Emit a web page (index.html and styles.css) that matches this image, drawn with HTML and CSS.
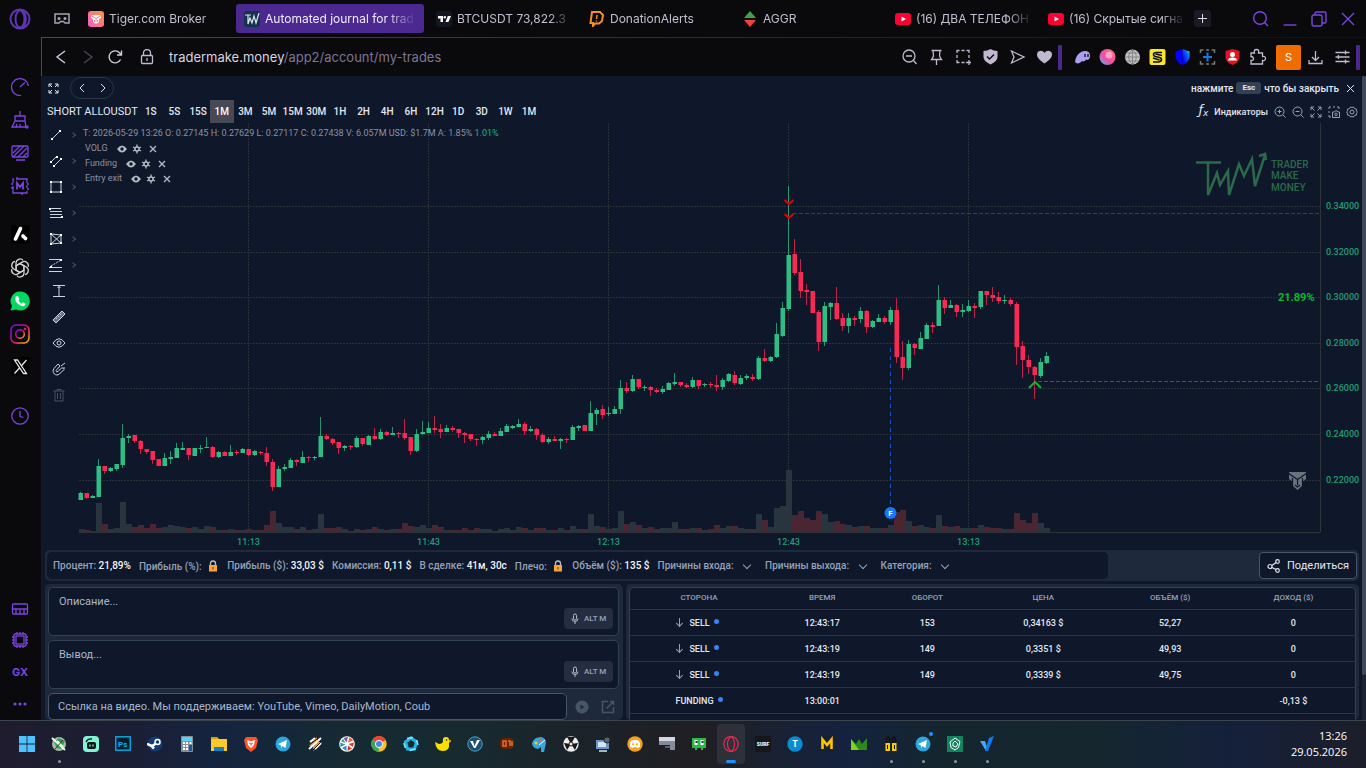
FILE: index.html
```html
<!DOCTYPE html>
<html lang="ru">
<head>
  <meta charset="UTF-8" />
  <meta name="viewport" content="width=device-width, initial-scale=1.0"/>
  <title>Automated journal for traders</title>
  <link rel="stylesheet" href="styles.css">
</head>
<body>

  <div class="browser">
    <!-- Browser side panel -->
    <aside class="sidebar">
      <div class="side-logo">
        <svg width="22" height="22" viewBox="0 0 22 22"><circle cx="11" cy="11" r="9.500"/><ellipse cx="11" cy="11" rx="4.500" ry="8.500"/><path d="M13 2.500c5 2 5 15 0 17"/></svg>
      </div>
      <div class="side-group">
        <svg width="18" height="18" viewBox="0 0 18 18"><path d="M10 17.500A8.500 8.500 0 1 1 17.400 8M9 9l5-4.500"/></svg>
        <svg width="18" height="18" viewBox="0 0 18 18"><path d="M9 0v5M4 5h10v5H4zM4 10l-3 6h14l-1-6M5 16l1-3M9 16v-3"/><circle cx="16" cy="16" r="1"/></svg>
        <svg width="18" height="18" viewBox="0 0 18 18"><rect x="1" y="2" width="16" height="11" rx="1"/><path d="M2 9l7-7M2 13L13 2M7 13l9-9M12 13l4-4M5 16h9"/></svg>
        <svg width="18" height="18" viewBox="0 0 18 18"><path d="M5 2h11v4M16 8v3M16 14v2H2V9M2 6V2h1M0 7h2M0 11h2M16 7h2M16 12h2M6 0v2M11 16v2"/><path d="M6 12.500V6l3 4 3-4v6.500" stroke-width="1.800"/></svg>
      </div>
      <div class="side-group apps">
        <svg width="19" height="19" viewBox="0 0 19 19" class="solid"><rect width="19" height="19" rx="3" fill="#000"/><path d="M9.500 3.500L4.500 14" stroke="#fff" stroke-width="3.600" stroke-linecap="round"/><path d="M12 11l2.500 2.500" stroke="#fff" stroke-width="3.600" stroke-linecap="round"/></svg>
        <svg width="20" height="20" viewBox="2 2 16 16" class="gpt"><path d="M10 6.500l3.200 1.800v5.600c0 3-3.700 4.400-5.700 2.200"/><path d="M10 6.500l3.200 1.800v5.600c0 3-3.700 4.400-5.700 2.200" transform="rotate(60 10 10)"/><path d="M10 6.500l3.200 1.800v5.600c0 3-3.700 4.400-5.700 2.200" transform="rotate(120 10 10)"/><path d="M10 6.500l3.200 1.800v5.600c0 3-3.700 4.400-5.700 2.200" transform="rotate(180 10 10)"/><path d="M10 6.500l3.200 1.800v5.600c0 3-3.700 4.400-5.700 2.200" transform="rotate(240 10 10)"/><path d="M10 6.500l3.200 1.800v5.600c0 3-3.700 4.400-5.700 2.200" transform="rotate(300 10 10)"/></svg>
        <svg width="20" height="20" viewBox="0 0 20 20" class="solid"><path fill="#00d95f" d="M10 .5a9.500 9.500 0 1 1-4 18L.5 19.500 2 15A9.500 9.500 0 0 1 10 .5z"/><path fill="#fff" d="M6 5.500l2-.5 1.500 3-1 1.500c.8 1.600 1.600 2.400 3 3l1.300-1.300 2.700 1.300c.2 1.500-1 2.700-2.500 2.700C9 15 5 10.500 5 7.500c0-.8.300-1.500 1-2z"/></svg>
        <svg width="20" height="20" viewBox="0 0 20 20"><defs><linearGradient id="insta" x1="0" y1="0" x2="1" y2="1"><stop offset="0" stop-color="#6a11ff"/><stop offset=".5" stop-color="#e0107a"/><stop offset="1" stop-color="#ffc400"/></linearGradient></defs><rect x="1" y="1" width="18" height="18" rx="5" stroke="url(#insta)" stroke-width="1.500"/><circle cx="10" cy="10" r="4.300" stroke="url(#insta)" stroke-width="1.500"/><circle cx="15" cy="5" r=".7" stroke="#e0107a"/></svg>
        <svg width="19" height="19" viewBox="0 0 19 19" class="solid"><rect width="19" height="19" rx="2" fill="#000"/><path d="M3.500 3h3l9 13.500h-3zM15.500 3l-5 5.700M8.500 11l-5 5.500" fill="none" stroke="#e6e6e6" stroke-width="1.300"/></svg>
      </div>
      <div class="side-group">
        <svg width="18" height="18" viewBox="0 0 18 18"><circle cx="9" cy="9" r="8.200"/><path d="M9 4v5.500l3.500 1"/></svg>
      </div>
      <div class="side-group bottom">
        <svg width="18" height="16" viewBox="0 0 18 16"><rect x="1.500" y="4" width="15" height="10" rx="1"/><path d="M2 9h14M5 9v5M9 10v4M13 9v5"/></svg>
        <svg width="18" height="18" viewBox="0 0 18 18"><rect x="3" y="3" width="12" height="12" rx="1"/><rect x="5" y="5" width="8" height="8"/><path d="M6 1v2M9 1v2M12 1v2M6 15v2M9 15v2M12 15v2M1 6h2M1 9h2M1 12h2M15 6h2M15 9h2M15 12h2"/></svg>
        <b class="gx">GX</b>
        <svg width="16" height="4" viewBox="0 0 16 4" class="dots"><circle cx="3" cy="2" r="1.600"/><circle cx="8" cy="2" r="1.600"/><circle cx="13" cy="2" r="1.600"/></svg>
      </div>
    </aside>

    <div class="window">
      <!-- Tabs -->
      <nav class="tabs">
        <svg class="island" width="18" height="14" viewBox="0 0 18 14"><path d="M2 2h14v9h-4l-1.500-1.500h-3L6 11H2z"/><circle cx="6" cy="6.500" r=".8"/><circle cx="12" cy="6.500" r=".8"/></svg>
        <a class="tab first" href="#">
          <svg width="16" height="16" viewBox="0 0 16 16"><defs><linearGradient id="tiger" x1="0" y1="1" x2="1" y2="0"><stop offset="0" stop-color="#f45bd4"/><stop offset="1" stop-color="#ff9431"/></linearGradient></defs><rect width="16" height="16" rx="3" fill="url(#tiger)"/><path d="M3 4h10v3l-2 1v3l-2 1.500H7L5 11V8L3 7z" fill="#fff"/><path d="M3 4.500l5 3 5-3M8 7.500v3M6.500 9v2M9.500 9v2" stroke="#f77b8c" fill="none"/></svg>
          <span>Tiger.com Broker</span>
        </a>
        <a class="tab active" href="#">
          <svg width="16" height="16" viewBox="0 0 16 16"><rect width="16" height="16" rx="3" fill="#14324e"/><path d="M1 4h6M4 4v9l2-6 2 5 2-7 2 7 3-10" fill="none" stroke="#dbe6ee" stroke-width="1.200"/></svg>
          <span>Automated journal for trad</span>
        </a>
        <a class="tab" href="#">
          <svg width="16" height="16" viewBox="0 0 16 16"><rect width="16" height="16" rx="3" fill="#131722"/><path d="M2 5h5v6H4.500V7.500H2zM9.500 11l2.300-6H15l-2.600 6z" fill="#fff"/><circle cx="8.800" cy="6.200" r="1.200" fill="#fff"/></svg>
          <span>BTCUSDT 73,822.3</span>
        </a>
        <a class="tab" href="#">
          <svg width="16" height="16" viewBox="0 0 16 16"><path d="M3 1h8l3 3-1 6-3 2.500H6L4 15v-3H1.500z" fill="none" stroke="#f59120" stroke-width="2"/><path d="M8 4l-.500 4M7.300 9.500v1" stroke="#f59120" stroke-width="1.500"/></svg>
          <span>DonationAlerts</span>
        </a>
        <a class="tab" href="#">
          <svg width="16" height="16" viewBox="0 0 16 16"><path d="M8 0l6 7H2z" fill="#43a047"/><path d="M8 16l6-7H2z" fill="#f44336"/></svg>
          <span>AGGR</span>
        </a>
        <a class="tab" href="#">
          <svg width="16" height="16" viewBox="0 0 16 16"><rect y="2" width="16" height="12" rx="3" fill="#ff0033"/><path d="M6.500 5.500v5L11 8z" fill="#fff"/></svg>
          <span>(16) ДВА ТЕЛЕФОН</span>
        </a>
        <a class="tab" href="#">
          <svg width="16" height="16" viewBox="0 0 16 16"><rect y="2" width="16" height="12" rx="3" fill="#ff0033"/><path d="M6.500 5.500v5L11 8z" fill="#fff"/></svg>
          <span>(16) Скрытые сигна</span>
        </a>
        <button class="new-tab" aria-label="New tab"><svg width="9" height="9" viewBox="0 0 9 9"><path d="M4.500 0v9M0 4.500h9"/></svg></button>
        <div class="win-controls">
          <svg width="18" height="18" viewBox="0 0 18 18"><circle cx="8" cy="8" r="6.300"/><path d="M12.500 12.500L16 16"/></svg>
          <svg width="18" height="18" viewBox="0 0 18 18"><path d="M2.500 15h13"/></svg>
          <svg width="18" height="18" viewBox="0 0 18 18"><rect x="2" y="5" width="10" height="11" rx="2"/><path d="M5 5V3.500Q5 2 6.500 2h8Q16 2 16 3.500v8q0 1.500-1.500 1.500H12"/></svg>
          <svg width="18" height="18" viewBox="0 0 18 18"><path d="M3 3l12 12M15 3L3 15"/></svg>
        </div>
      </nav>

      <!-- Address bar -->
      <div class="address">
        <button class="nav" aria-label="Back"><svg width="16" height="16" viewBox="0 0 16 16"><path d="M12 2L4 8l8 6"/></svg></button>
        <button class="nav off" aria-label="Forward"><svg width="16" height="16" viewBox="0 0 16 16"><path d="M4 2l8 6-8 6"/></svg></button>
        <button class="nav" aria-label="Reload"><svg width="16" height="16" viewBox="0 0 16 16"><path d="M13.500 10.500a6 6 0 1 1-.8-6.500L14 5.500M14.500 1.500v4.500H10"/></svg></button>
        <svg class="lock" width="16" height="16" viewBox="0 0 16 16"><rect x="2.500" y="6.500" width="11" height="8" rx="1"/><path d="M4.500 6V4a3.500 3.500 0 0 1 7 0v2M8 9v3"/></svg>
        <span class="url"><b>tradermake.money</b>/app2/account/my-trades</span>

        <div class="tools">
          <svg width="16" height="16" viewBox="0 0 16 16"><circle cx="7.500" cy="7" r="6"/><path d="M4.500 7h6M12 11.500L15 15"/></svg>
          <svg width="16" height="16" viewBox="0 0 16 16"><path d="M3 1.500h10M4.500 1.500L5 7l-2 3.500h10L11 7l.5-5.500M8 10.500V16"/></svg>
          <svg width="16" height="16" viewBox="0 0 16 16"><path d="M1.500 4V1.500H4M6 1.500h3M11 1.500h2.500V4M13.500 6v3M1.500 6v3M1.500 11v2.500H4M6 13.500h3M10.500 13.500h5M13.500 11v5"/></svg>
          <svg width="16" height="16" viewBox="0 0 16 16"><path d="M1 2q4 0 7-2 3 2 7 2v6q0 4-7 7.500Q1 12 1 8z" fill="#c0b9cf" stroke="none"/><path d="M4.500 7.500L7 10l4.500-4.500" stroke="#0a090c"/></svg>
          <svg width="16" height="16" viewBox="0 0 16 16"><path d="M2 2l12.500 6L2 14l2.500-6z"/></svg>
          <svg width="16" height="16" viewBox="0 0 16 16"><path d="M8 14.500C3 11 .5 8.500.5 5.500.5 1.500 6 .5 8 4c2-3.500 7.500-2.500 7.500 1.500 0 3-2.500 5.500-7.500 9z" fill="#c0b9cf" stroke="none"/></svg>
        </div>
        <i class="divider"></i>
        <div class="extensions">
          <svg width="17" height="16" viewBox="0 0 17 16"><path d="M1 13C2 6 6 2 11 2c4 0 5.500 2.500 5 6-.500 3-3 3.500-4 2.500-1 2-3 2.500-4 1.500-2 2.500-5 3.500-7 1z" fill="#ab9ff2"/><path d="M11 5v3M14 5v3" stroke="#0a090c" stroke-width="1.300"/></svg>
          <svg width="16" height="16" viewBox="0 0 16 16"><defs><linearGradient id="orb" x1="0" y1="1" x2="1" y2="0"><stop offset="0" stop-color="#36c6f5"/><stop offset=".4" stop-color="#f04fa8"/><stop offset="1" stop-color="#ff6f61"/></linearGradient></defs><circle cx="8" cy="8" r="8" fill="url(#orb)"/><circle cx="9.500" cy="6" r="3.500" fill="#ffa4c8"/></svg>
          <svg width="16" height="16" viewBox="0 0 16 16"><circle cx="8" cy="8" r="7.500" fill="#c4c4c4"/><path d="M.5 8h15M2 4h12M2 12h12M8 .5v15M8 .5c-5 4-5 11 0 15M8 .5c5 4 5 11 0 15" stroke="#777" stroke-width=".8" fill="none"/></svg>
          <svg width="16" height="16" viewBox="0 0 16 16"><rect width="16" height="16" rx="2" fill="#f7e733"/><path d="M12.500 3.500H7q-3 0-3 2t4 2.500 4 2.500-3 2.500H3.500M12.500 6.500L6 5M10 11l-6.500-2" fill="none" stroke="#111" stroke-width="1.600"/></svg>
          <svg width="16" height="16" viewBox="0 0 16 16"><defs><linearGradient id="trust" x1="0" y1="1" x2="1" y2="0"><stop offset=".2" stop-color="#0500ff"/><stop offset=".7" stop-color="#0a6cff"/><stop offset="1" stop-color="#3fffa0"/></linearGradient></defs><path d="M8 0L1 2.500V8q.5 5 7 8z" fill="#0500ff"/><path d="M8 0l7 2.500V8q-.500 5-7 8z" fill="url(#trust)"/></svg>
          <svg width="16" height="16" viewBox="0 0 16 16"><path d="M1 4V1h3M12 1h3v3M15 12v3h-3M4 15H1v-3M6.500 1h3M6.500 15h3" fill="none" stroke="#777" stroke-width="1.500"/><path d="M8 3.500v9M3.500 8h9" stroke="#0d7ae8" stroke-width="2"/></svg>
          <svg width="16" height="16" viewBox="0 0 16 16"><path d="M8 0l7 2v6q0 5-7 8-7-3-7-8V2z" fill="#e01423"/><circle cx="8" cy="5.500" r="2.500" fill="#fff"/><path d="M3.500 11.500q0-3 4.500-3t4.500 3z" fill="#fff"/></svg>
          <svg width="18" height="18" viewBox="0 0 18 18"><path d="M2.500 5H6q-1-3.500 2-3.500T10 5h4v3.500q3-.5 3 2t-3 2V16H2.500v-3.500q3 0 2.500-2t-2.500-2z" fill="none" stroke="#c0b9cf" stroke-width="1.300"/></svg>
        </div>
        <button class="profile">S</button>
        <div class="tools">
          <svg width="16" height="16" viewBox="0 0 16 16"><path d="M8 2v9M4.500 8L8 11.500 11.500 8M1.500 11v3.500h13V11"/></svg>
          <svg width="16" height="16" viewBox="0 0 16 16"><path d="M1 3.500h14M1 8h14M1 12.500h14M11 1.500v4M4 6v4M11 10.500v4"/></svg>
        </div>
        <i class="divider"></i>
      </div>

      <!-- Trade journal -->
      <main class="app">
        <div class="app-body">
          <div class="row-top">
            <svg class="expand" width="11" height="11" viewBox="0 0 11 11"><path d="M1 4V1h3M7 1h3v3M10 7v3H7M4 10H1V7M1 1l3 3M10 1L7 4M10 10L7 7M1 10l3-3"/></svg>
            <div class="pager">
              <button aria-label="Предыдущая"><svg width="8" height="10" viewBox="0 0 8 10"><path d="M6 1L2 5l4 4"/></svg></button>
              <button aria-label="Следующая"><svg width="8" height="10" viewBox="0 0 8 10"><path d="M2 1l4 4-4 4"/></svg></button>
            </div>
            <div class="close-hint">нажмите <kbd>Esc</kbd> что бы закрыть
              <button class="close" aria-label="Закрыть"><svg width="9" height="9" viewBox="0 0 9 9"><path d="M1 1l7 7M8 1L1 8"/></svg></button>
            </div>
          </div>

          <div class="row-frames">
            <h1>SHORT ALLOUSDT</h1>
            <div class="frames">
              <button>1S</button><button>5S</button><button>15S</button><button class="on">1M</button><button>3M</button><button>5M</button><button>15M</button><button>30M</button><button>1H</button><button>2H</button><button>4H</button><button>6H</button><button>12H</button><button>1D</button><button>3D</button><button>1W</button><button>1M</button>
            </div>
            <div class="chart-tools">
              <span class="fx">ƒ<sub>x</sub></span>
              <button class="indicators">Индикаторы</button>
              <svg width="12" height="12" viewBox="0 0 12 12"><circle cx="5.500" cy="5.500" r="4.500"/><path d="M9 9l2.500 2.500M3.500 5.500h4M5.500 3.500v4"/></svg>
              <svg width="12" height="12" viewBox="0 0 12 12"><circle cx="5.500" cy="5.500" r="4.500"/><path d="M9 9l2.500 2.500M3.500 5.500h4"/></svg>
              <svg width="12" height="12" viewBox="0 0 12 12"><path d="M1 4V1h3M8 1h3v3M11 8v3H8M4 11H1V8M1 1l3.500 3.500M11 1L7.500 4.500M11 11L7.500 7.500M1 11l3.500-3.500"/></svg>
              <svg width="12" height="12" viewBox="0 0 12 12"><path d="M1 3V1h2M5 1h2M9 1h2v2M1 5v2M1 9v2h2"/><path d="M4.500 6h2l1-1.200h1.500L10 6h1.500v5.500h-7z"/><circle cx="8" cy="8.500" r="1.300"/></svg>
              <svg width="12" height="12" viewBox="0 0 12 12"><circle cx="6" cy="6" r="2"/><path d="M4.500 1l1.500.5L7.500 1l1 1.500 2 .7-.2 1.800L11.500 6l-1.200 1.200.2 1.800-2 .5-1 1.500L6 10.500 4.500 11l-1-1.500-2-.5.2-1.800L.5 6l1.200-1-.2-1.800 2-.7z"/></svg>
            </div>
          </div>

          <div class="chart-row">
            <!-- Drawing tools -->
            <div class="draw-tools">
              <button class="more" aria-label="Линия"><svg width="14" height="14" viewBox="0 0 14 14"><path d="M3 11l8-8"/><path d="M2 10h2v2H2zM10 2h2v2h-2z" class="dot"/></svg></button>
              <button class="more" aria-label="Канал"><svg width="14" height="14" viewBox="0 0 14 14"><path d="M2 8l6-6M5 12l7-7"/><path d="M1 7h2v2H1zM4 11h2v2H4zM11 4h2v2h-2zM7 2h2v2H7z" class="dot"/></svg></button>
              <button class="more" aria-label="Прямоугольник"><svg width="14" height="14" viewBox="0 0 14 14"><path d="M2 2h10v10H2z"/><path d="M1 1h2v2H1zM11 1h2v2h-2zM1 11h2v2H1zM11 11h2v2h-2z" class="dot"/></svg></button>
              <button class="more" aria-label="Фибоначчи"><svg width="14" height="14" viewBox="0 0 14 14"><path d="M0 2.500h12M1 5.500h12M1 8.500h12M1 11.500h12"/><path d="M0 2h2v2H0zM12 10h2v2h-2z" class="dot"/></svg></button>
              <button class="more" aria-label="Паттерн"><svg width="14" height="14" viewBox="0 0 14 14"><path d="M2 2l10 1v8L2 12zM2 2l10 9M12 3L2 12"/><path d="M1 1h2v2H1zM11 2h2v2h-2zM1 11h2v2H1zM11 10h2v2h-2z" class="dot"/></svg></button>
              <button class="more" aria-label="Волны"><svg width="14" height="14" viewBox="0 0 14 14"><path d="M0 1.500h13M0 9.500h13M0 13.500h13"/><path d="M2 8l10-6" stroke-dasharray="2 1"/><path d="M1 8h2v2H1zM11 1h2v2h-2z" class="dot"/></svg></button>
              <button aria-label="Диапазон"><svg width="14" height="14" viewBox="0 0 14 14"><path d="M1 1.500h12M1 12.500h12M7 2v10M5.500 4L7 2.500 8.500 4"/></svg></button>
              <button aria-label="Линейка"><svg width="14" height="14" viewBox="0 0 14 14"><path d="M1 10l9-9 3 3-9 9zM4 8l1 1M6 6l1 1M8 4l1 1" fill="#64748b"/></svg></button>
              <button aria-label="Показать"><svg width="14" height="14" viewBox="0 0 14 14"><path d="M1 7q6-8.500 12 0-6 8.500-12 0z"/><circle cx="7" cy="7" r="2"/></svg></button>
              <button aria-label="Магнит"><svg width="14" height="14" viewBox="0 0 14 14"><path d="M6 2L2 6.500c-3 4 2 8.500 5.500 5.500L12 7.500 10 5.500l-4 4q-2 1-2-1L8 4zM9 4l4-3M11 6h2"/></svg></button>
              <button class="off" aria-label="Удалить"><svg width="14" height="14" viewBox="0 0 14 14"><path d="M1.500 3h11M5 3V1.500h4V3M3 3v10h8V3M5.500 5v6M8.500 5v6"/></svg></button>
            </div>

            <div class="chart-wrap">
              <svg id="chart" viewBox="78 123 1284 425">
                <g id="grid"></g>
                <g id="volume"></g>
                <g id="candles"></g>
                <g id="marks"></g>
                <g class="brand">
                  <path d="M1196 162.500h25M1208 162v33l9-22 3 12 8-14 1 24 10-31 5 12 8-17 3 27 10-31M1259 156l6-2 1 6"/>
                  <text x="1271" y="168">TRADER</text>
                  <text x="1271" y="179">MAKE</text>
                  <text x="1271" y="191">MONEY</text>
                </g>
                <path class="tiger-mark" d="M1289 472h17v7l-4 3v4l-4.500 4-4.500-4v-4l-4-3z"/>
                <path class="tiger-lines" d="M1288 473l9.500 6.500 9.500-6.500M1297.500 479v6M1292.500 478v9M1302.500 478v9M1295 485l2.500 2 2.500-2"/>
              </svg>
              <div class="legend">
                <p>T: 2026-05-29 13:26 O: 0.27145 H: 0.27629 L: 0.27117 C: 0.27438 V: 6.057M USD: $1.7M A: 1.85% <em>1.01%</em></p>
                <div class="ind">VOLG
                  <svg width="44" height="10" viewBox="0 0 44 10"><path d="M0 5q5-7 10 0-5 7-10 0z"/><circle cx="5" cy="5" r="1.700" class="hole"/><circle cx="20" cy="5" r="2.800" class="gear"/><path d="M20 .5v9M16 3l8 4M16 7l8-4" class="teeth"/><circle cx="20" cy="5" r="1.300" class="hole"/><path d="M33 2l6 6M39 2l-6 6" class="cross"/></svg>
                </div>
                <div class="ind">Funding
                  <svg width="44" height="10" viewBox="0 0 44 10"><path d="M0 5q5-7 10 0-5 7-10 0z"/><circle cx="5" cy="5" r="1.700" class="hole"/><circle cx="20" cy="5" r="2.800" class="gear"/><path d="M20 .5v9M16 3l8 4M16 7l8-4" class="teeth"/><circle cx="20" cy="5" r="1.300" class="hole"/><path d="M33 2l6 6M39 2l-6 6" class="cross"/></svg>
                </div>
                <div class="ind">Entry exit
                  <svg width="44" height="10" viewBox="0 0 44 10"><path d="M0 5q5-7 10 0-5 7-10 0z"/><circle cx="5" cy="5" r="1.700" class="hole"/><circle cx="20" cy="5" r="2.800" class="gear"/><path d="M20 .5v9M16 3l8 4M16 7l8-4" class="teeth"/><circle cx="20" cy="5" r="1.300" class="hole"/><path d="M33 2l6 6M39 2l-6 6" class="cross"/></svg>
                </div>
              </div>
            </div>
          </div>

          <!-- Trade summary -->
          <div class="summary">
            <div class="stats">
              <span>Процент: <b>21,89%</b></span>
              <span>Прибыль (%): <svg class="padlock" width="10" height="12" viewBox="0 0 10 12"><path d="M2.500 5V3.500a2.500 2.500 0 0 1 5 0V5" fill="none" stroke="#b5bfc9" stroke-width="1.300"/><rect x="1" y="5" width="8" height="6.500" fill="#f9a43a"/><path d="M5 7v2.500" stroke="#8a5312" stroke-width="1.300"/></svg></span>
              <span>Прибыль ($): <b>33,03 $</b></span>
              <span>Комиссия: <b>0,11 $</b></span>
              <span>В сделке: <b>41м, 30с</b></span>
              <span>Плечо: <svg class="padlock" width="10" height="12" viewBox="0 0 10 12"><path d="M2.500 5V3.500a2.500 2.500 0 0 1 5 0V5" fill="none" stroke="#b5bfc9" stroke-width="1.300"/><rect x="1" y="5" width="8" height="6.500" fill="#f9a43a"/><path d="M5 7v2.500" stroke="#8a5312" stroke-width="1.300"/></svg></span>
              <span>Объём ($): <b>135 $</b></span>
              <label>Причины входа: <select><option></option></select></label>
              <label>Причины выхода: <select><option></option></select></label>
              <label>Категория: <select><option></option></select></label>
            </div>
            <button class="share"><svg width="14" height="14" viewBox="0 0 14 14"><circle cx="3" cy="7.500" r="2"/><circle cx="10.500" cy="2.500" r="1.800"/><circle cx="10.500" cy="11.500" r="1.800"/><path d="M5 6.500l4-3M5 8.500l4 2"/></svg>Поделиться</button>
          </div>

          <div class="bottom-row">
            <section class="notes">
              <div class="note">
                <textarea aria-label="Описание" placeholder="Описание..."></textarea>
                <button><svg width="8" height="12" viewBox="0 0 8 12"><rect x="2.500" y="1" width="3" height="6" rx="1.500"/><path d="M1 5.500q0 3 3 3t3-3M4 8.500V11"/></svg>ALT M</button>
              </div>
              <div class="note">
                <textarea aria-label="Вывод" placeholder="Вывод..."></textarea>
                <button><svg width="8" height="12" viewBox="0 0 8 12"><rect x="2.500" y="1" width="3" height="6" rx="1.500"/><path d="M1 5.500q0 3 3 3t3-3M4 8.500V11"/></svg>ALT M</button>
              </div>
              <div class="video">
                <input type="text" aria-label="Ссылка на видео" placeholder="Ссылка на видео. Мы поддерживаем: YouTube, Vimeo, DailyMotion, Coub">
                <svg width="14" height="14" viewBox="0 0 14 14"><circle cx="7" cy="7" r="6.500" fill="#475569"/><path d="M5.500 4.500v5l4-2.500z" fill="#1e293b"/></svg>
                <svg width="14" height="14" viewBox="0 0 14 14"><path d="M7 1.500H1.500v11h11V7M9 1.500h3.500V5M12.500 1.500L5.500 8.500" fill="none" stroke="#475569" stroke-width="1.500"/></svg>
              </div>
            </section>

            <section class="orders">
              <table>
                <thead>
                  <tr><th class="w-side">СТОРОНА</th><th class="w-time">ВРЕМЯ</th><th class="w-turn">ОБОРОТ</th><th class="w-price">ЦЕНА</th><th class="w-vol">ОБЪЁМ ($)</th><th class="w-vol">ДОХОД ($)</th></tr>
                </thead>
                <tbody>
                  <tr><td><i class="down"></i>SELL<i class="bullet"></i></td><td>12:43:17</td><td>153</td><td>0,34163 $</td><td>52,27</td><td>0</td></tr>
                  <tr><td><i class="down"></i>SELL<i class="bullet"></i></td><td>12:43:19</td><td>149</td><td>0,3351 $</td><td>49,93</td><td>0</td></tr>
                  <tr><td><i class="down"></i>SELL<i class="bullet"></i></td><td>12:43:19</td><td>149</td><td>0,3339 $</td><td>49,75</td><td>0</td></tr>
                  <tr><td>FUNDING<i class="bullet"></i></td><td>13:00:01</td><td></td><td></td><td></td><td>-0,13 $</td></tr>
                  <tr><td></td><td></td><td></td><td></td><td></td><td></td></tr>
                </tbody>
              </table>
            </section>
          </div>
        </div>
        <div class="scroll"><i></i></div>
      </main>
    </div>
  </div>

  <!-- Taskbar -->
  <footer class="taskbar">
    <div class="task-icons">
      <span><svg viewBox="0 0 16 16"><path d="M0 0h7.600v7.600H0zM8.400 0H16v7.600H8.400zM0 8.400h7.600V16H0zM8.400 8.400H16V16H8.400z" fill="#4cc2ff"/></svg></span>
      <span class="run"><svg viewBox="0 0 16 16"><circle cx="8" cy="8" r="7" fill="#a9b8a9"/><path d="M3 6l5-4 6 3-4 8-4-1z" fill="#2fa14a"/><path d="M1 2l13 12M6 5l6 6" stroke="#efe" stroke-width="1.800"/><path d="M4 13l8-9" stroke="#333"/></svg></span>
      <span><svg viewBox="0 0 16 16"><rect width="16" height="16" rx="4" fill="#80f5d2"/><rect x="4" y="6" width="9" height="7" rx="2" fill="#09161d"/><path d="M3 6q2-4 6-3" stroke="#09161d" fill="none" stroke-width="1.300"/><path d="M7 8.500v2M10 8.500v2" stroke="#80f5d2" stroke-width="1.300"/></svg></span>
      <span><svg viewBox="0 0 16 16"><rect x=".8" y=".8" width="14.400" height="13.400" fill="#001d34" stroke="#00b4e6" stroke-width="1.400"/><text x="3" y="11" class="ps">Ps</text></svg></span>
      <span><svg viewBox="0 0 16 16"><circle cx="8" cy="8" r="7.500" fill="#123b70"/><circle cx="10.500" cy="6" r="2.500" fill="none" stroke="#fff" stroke-width="1.500"/><path d="M0 8l5 2 4-2.500M5 10.500l2 2" fill="none" stroke="#fff" stroke-width="2.500"/></svg></span>
      <span><svg viewBox="0 0 16 16"><rect x="2" width="12" height="16" rx="1" fill="#83909a"/><rect x="3" y="1" width="10" height="4" fill="#5bd1f2"/><path d="M4 7h2M7 7h2M4 10h2M7 10h2M4 13h2M7 13h2M10.500 7h2" stroke="#fff" stroke-width="2"/><path d="M10 9h3v6h-3z" fill="#175a9c"/></svg></span>
      <span><svg viewBox="0 0 16 16"><path d="M0 1h6l2 2h8v12H0z" fill="#ffc928"/><path d="M0 1h6l1 2H0z" fill="#d99a12"/><path d="M3 15v-4h10v4z" fill="#147fc9"/></svg></span>
      <span><svg viewBox="0 0 16 16"><path d="M3 1h10l2 3-2 8-5 4-5-4L1 4z" fill="#fb542b"/><path d="M4 4l3 1h2l3-1-1 5-3 3-3-3z" fill="#fff"/><path d="M6 7l2 1 2-1M8 8v2" stroke="#fb542b" fill="none"/></svg></span>
      <span><svg viewBox="0 0 16 16"><circle cx="8" cy="8" r="7.500" fill="#2ca5e0"/><path d="M3 8l9-4-1.500 8L7.500 10 6.500 12 6 9.500z" fill="#fff"/></svg></span>
      <span><svg viewBox="0 0 16 16"><path d="M2 9l8-8v5h5l-9 9v-5H1z" fill="#ef8a22"/><path d="M3 6l5-4M8 13l6-6M2 13L14 2" stroke="#fff" stroke-width="1.800"/><path d="M1 10l9-7M6 14l8-8" stroke="#151515"/></svg></span>
      <span><svg viewBox="0 0 16 16"><circle cx="8" cy="8" r="7.800" fill="#fff"/><path d="M7.500 6.500L4.500 2 9 1z" fill="#7652a8"/><path d="M9 6.500L10.500 1l4 3.500z" fill="#e36b37"/><path d="M9.500 8L15 6.500 14 11z" fill="#d13d31"/><path d="M9 9.500l4 3-4.500 2.500z" fill="#d13d31"/><path d="M7.500 9.500l0 5.500-4.500-3z" fill="#348fc0"/><path d="M6.500 8.500L1.500 11 1.200 6.500z" fill="#348fc0"/><path d="M6.500 7L2 5.500l2-3z" fill="#47a96f"/></svg></span>
      <span><svg viewBox="0 0 16 16"><circle cx="8" cy="8" r="7.700" fill="#fbc116"/><path d="M8 8L1.300 4A7.700 7.700 0 0 1 14.700 4z" fill="#ea4335"/><path d="M8 8L1.300 4A7.700 7.700 0 0 0 7.500 15.700z" fill="#34a853"/><circle cx="8" cy="8" r="3.600" fill="#4285f4" stroke="#fff"/></svg></span>
      <span><svg viewBox="0 0 16 16"><path d="M8 2l5.500 4-2 7h-7l-2-7z" fill="none" stroke="#1fb5e6" stroke-width="3.200"/><path d="M4 2.500l6-1M13.500 4l1.500 5M12.500 13l-6 1.500M2.500 12L.8 7" fill="none" stroke="#8de6fb" stroke-width="1.500"/></svg></span>
      <span><svg viewBox="0 0 16 16"><path d="M0 6l4 2q3 0 4-2-1-5 3-5 3 0 3 3l2 1-2 2q1 8-6 8-7 0-8-9z" fill="#fbe002"/><circle cx="11.500" cy="4" r=".8" fill="#111"/><path d="M14 4h2v2h-2z" fill="#f4901d"/></svg></span>
      <span><svg viewBox="0 0 16 16"><circle cx="8" cy="8" r="7.200" fill="#1d4d6c" stroke="#48a0cc"/><path d="M3 5h3l1.500 5L10 4h3L8.500 12H7z" fill="#fff"/></svg></span>
      <span><svg viewBox="0 0 16 16"><path d="M1 4l3-2h8l3 2v7l-3 2H4l-3-2z" fill="#5c2408"/><path d="M4 5v5h3V5zM9 5h2v5M13 5v5" fill="none" stroke="#f06d1b" stroke-width="1.500"/></svg></span>
      <span><svg viewBox="0 0 16 16"><path d="M1 7q2-6 9-6 5 1 5 6l-2 9h-3V11L7 13Q1 12 1 7z" fill="#36a6dd"/><circle cx="5" cy="7" r="1.500" fill="#f6cc31"/><circle cx="9" cy="4" r="1.500" fill="#ec653e"/><path d="M8 9l6-5" stroke="#fff"/></svg></span>
      <span><svg viewBox="0 0 16 16"><circle cx="8" cy="8" r="7.700" fill="#eee"/><path d="M8 8L4 1h8zM8 8l7-1-3 7zM8 8L1 7l3 7z" fill="#191919"/><circle cx="8" cy="8" r="2" fill="#eee" stroke="#191919"/></svg></span>
      <span><svg viewBox="0 0 16 16"><path d="M1 4h13v9H1z" fill="#6a98ca"/><path d="M3 6h8v5H3z" fill="#d3e4f2"/><circle cx="12" cy="4" r="3" fill="#59636d" stroke="#202830"/><path d="M4 15h8" stroke="#a9b4bd" stroke-width="2"/></svg></span>
      <span><svg viewBox="0 0 16 16"><circle cx="8" cy="8" r="7.700" fill="#f7a21b"/><path d="M3 11V7q1-3 3-3h4q2 0 3 3v4l-3 1-1-1H7l-1 1z" fill="#fff"/><circle cx="6.200" cy="8.300" r="1.100" fill="#f7a21b"/><circle cx="9.800" cy="8.300" r="1.100" fill="#f7a21b"/></svg></span>
      <span><svg viewBox="0 0 16 16"><path d="M0 1h16v13h-5V9H0z" fill="#858b9b"/><path d="M0 1h16v4H0z" fill="#d5d8e2"/><path d="M6 10h5v2H6z" fill="#5b606d"/></svg></span>
      <span><svg viewBox="0 0 16 16"><path d="M1 2h14v10h-3v2h-2v-2H6v2H4v-2H1z" fill="#2aba45"/><path d="M3.500 4h3v5h-3zM9.500 4h3v5h-3z" fill="#fff"/><path d="M4.500 6h2M10.500 6h2" stroke="#22304a" stroke-width="2"/></svg></span>
      <span class="current"><svg viewBox="0 0 16 16"><ellipse cx="8" cy="8" rx="7.200" ry="7.500" fill="none" stroke="#e21646" stroke-width="1.200"/><ellipse cx="8" cy="8" rx="3.500" ry="6.800" fill="none" stroke="#e21646" stroke-width="1.200"/></svg></span>
      <span><svg viewBox="0 0 16 16"><rect width="16" height="16" fill="#15171a"/><text x="8" y="10" class="surf">SURF</text></svg></span>
      <span><svg viewBox="0 0 16 16"><circle cx="8" cy="8" r="7.700" fill="#0b8bd4"/><text x="8" y="11" class="tee">T</text></svg></span>
      <span><svg viewBox="0 0 16 16"><rect x="1" y="1" width="14" height="14" fill="#162035"/><path d="M3.500 13V3.500L8 9l4.500-5.500V13" fill="none" stroke="#ffc400" stroke-width="2.600"/></svg></span>
      <span><svg viewBox="0 0 16 16"><path d="M0 3l5 5 3-5 3 5 5-6v12H4z" fill="#2d8a1a"/><path d="M0 3l8 11H0z" fill="#7cd321"/></svg></span>
      <span class="run"><svg viewBox="0 0 16 16"><path d="M3.500 7V3q1.500-4 3 0v4M9.500 7V3q1.500-4 3 0v4" fill="none" stroke="#111" stroke-width="1.500"/><path d="M2.500 7h4.500v8H2.500zM9 7h4.500v8H9z" fill="#fc0"/><path d="M4.500 9v4M11.500 9v4" stroke="#111"/></svg></span>
      <span class="run badge"><svg viewBox="0 0 16 16"><circle cx="8" cy="8" r="7.500" fill="#2ca5e0"/><path d="M3 8l9-4-1.500 8L7.500 10 6.500 12 6 9.500z" fill="#fff"/></svg></span>
      <span class="run"><svg viewBox="0 0 16 16"><rect width="16" height="16" fill="#10835f"/><path d="M8 2l5 3.500-1.500 6L8 14l-4-2.500L3 6zM6 7l2-2 3 3-2 3-3-1z" fill="none" stroke="#fff"/></svg></span>
      <span class="run"><svg viewBox="0 0 16 16"><path d="M1 5h5l2 6-1 4z" fill="#45a8ff"/><path d="M10 2l5-2-6 15H6z" fill="#0c7cf5"/></svg></span>
    </div>
    <div class="clock">13:26<br>29.05.2026</div>
  </footer>

  <script src="script.js"></script>
</body>
</html>
```

FILE: styles.css
```css
* {
  box-sizing: border-box;
}

body {
  margin: 0;
  height: 100vh;
  display: flex;
  flex-direction: column;
  overflow: hidden;
  background: #0a090c;
  color: #e2e8f0;
  font-family: Roboto, "Liberation Sans", sans-serif;
  font-size: 11px;
}

button,
input,
textarea,
select {
  font: inherit;
  color: inherit;
  background: none;
  border: 0;
  padding: 0;
  margin: 0;
}

svg {
  flex: none;
  display: block;
}

.browser {
  flex: 1;
  min-height: 0;
  display: flex;
}

/* Side panel */
.sidebar {
  width: 41px;
  padding-right: 1px;
  display: flex;
  flex-direction: column;
  align-items: center;
  color: #7a45e0;
}

.sidebar svg {
  fill: none;
  stroke: currentColor;
  stroke-width: 1.3;
}

.sidebar svg.solid {
  stroke: none;
}

.sidebar svg.dots {
  fill: currentColor;
  stroke: none;
}

.sidebar svg.gpt {
  stroke: #d6d6d6;
  stroke-width: 1;
}

.side-logo {
  height: 70px;
  padding-top: 8px;
}

.side-logo svg {
  stroke-width: 2;
  color: #5f35b0;
}

.side-group {
  display: grid;
  grid-auto-rows: 33px;
  place-items: center;
  margin-bottom: 16px;
}

.side-group.bottom {
  margin-top: auto;
  margin-bottom: 0;
  grid-auto-rows: 32px;
}

.gx {
  font-size: 11px;
  font-family: Inter, sans-serif;
}

/* Tabs */
.window {
  flex: 1;
  min-width: 0;
  display: flex;
  flex-direction: column;
}

.tabs {
  height: 37px;
  display: flex;
  align-items: center;
  font: 12px Inter, sans-serif;
  color: #c3bed0;
}

.island {
  margin: 0 9px 0 12px;
  fill: none;
  stroke: #a8a3b5;
  stroke-width: 1.5;
}

.tab {
  width: 153px;
  height: 29px;
  padding: 0 8px;
  display: flex;
  align-items: center;
  gap: 5px;
  color: inherit;
  text-decoration: none;
  border-radius: 3px;
}

.tab span {
  flex: 1;
  white-space: nowrap;
  -webkit-mask-image: linear-gradient(90deg, #000 80%, transparent);
  mask-image: linear-gradient(90deg, #000 80%, transparent);
}

.tab.first {
  margin-right: 3px;
}

.tab.active {
  width: 188px;
  margin-right: 4px;
  background: #4b2991;
  color: #efeaf8;
}

.new-tab {
  width: 17px;
  height: 17px;
  margin-left: 1px;
  display: grid;
  place-items: center;
  background: #1b1a24;
  border-radius: 2px;
}

.new-tab svg {
  stroke: #dcd8e6;
}

.win-controls {
  display: flex;
  gap: 11px;
  margin-left: auto;
  margin-right: 9px;
}

.win-controls svg {
  fill: none;
  stroke: #7a45e0;
  stroke-width: 1.4;
}

/* Address bar */
.address {
  height: 39px;
  display: flex;
  align-items: center;
  padding: 0 6px 0 5px;
  border-top: 1px solid;
  border-left: 1px solid #3a2467;
  border-image: linear-gradient(90deg, #5a31a8, #25204a 60%, #0f0f1c) 1;
  color: #c0b9cf;
}

.address svg {
  fill: none;
}

.nav {
  width: 27px;
  display: grid;
  place-items: center;
  stroke: #d0cada;
  stroke-width: 1.4;
}

.nav.off {
  stroke: #4a4655;
}

.lock {
  margin: 0 14px 0 11px;
  stroke: #c0b9cf;
  stroke-width: 1.3;
}

.url {
  flex: 1;
  font: 13px Inter, sans-serif;
  color: #7d7694;
}

.url b {
  font-weight: 400;
  color: #d8d2e4;
}

.tools {
  display: flex;
}

.tools svg {
  width: 27px;
  stroke: #c0b9cf;
  stroke-width: 1.3;
}

.divider {
  width: 4px;
  height: 25px;
  border-radius: 1px;
  background: #4b2991;
}

.extensions {
  display: flex;
  align-items: center;
  margin: 0 6px 0 8px;
}

.extensions svg {
  width: 25px;
}

.profile {
  width: 25px;
  height: 25px;
  margin-right: 1px;
  background: #ef6c00;
  border-radius: 2px;
  color: #fff;
  font-family: Inter, sans-serif;
}

/* App */
.app {
  flex: 1;
  min-height: 0;
  display: flex;
  background: #0f172a;
  border-left: 1px solid #1a1530;
}

.app-body {
  flex: 1;
  min-width: 0;
  display: flex;
  flex-direction: column;
  overflow: hidden;
}

.scroll {
  width: 4px;
  background: #1c2434;
}

.scroll i {
  display: block;
  height: 93%;
  background: #3f4959;
  border-radius: 2px;
}

.row-top {
  height: 24px;
  display: flex;
  align-items: center;
  padding-left: 6px;
}

.row-top svg {
  fill: none;
  stroke: #e2e8f0;
}

.pager {
  display: flex;
  justify-content: space-around;
  width: 44px;
  height: 22px;
  margin-left: 11px;
  border: 1px solid #2a3648;
  border-radius: 11px;
}

.close-hint {
  display: flex;
  align-items: center;
  gap: 3px;
  margin-left: auto;
  margin-right: 7px;
  font-size: 10px;
  font-weight: 500;
}

.close-hint kbd {
  background: #334155;
  border-radius: 3px;
  padding: 0 6px;
  font: bold 8px/12px Roboto, sans-serif;
}

.close {
  margin-left: 4px;
}

.row-frames {
  height: 23px;
  display: flex;
  align-items: stretch;
  padding-left: 5px;
}

.row-frames h1 {
  margin: 0;
  width: 92px;
  font-size: 11px;
  font-weight: 400;
  line-height: 23px;
  white-space: nowrap;
}

.frames {
  flex: 0 0 402px;
  display: flex;
}

.frames button {
  flex: 1;
  font-size: 10px;
  font-weight: 500;
}

.frames .on {
  background: #474a54;
  color: #fff;
}

.chart-tools {
  display: flex;
  align-items: center;
  gap: 6px;
  margin-left: auto;
  margin-right: 4px;
  font-size: 9px;
  font-weight: 500;
}

.chart-tools svg {
  fill: none;
  stroke: #94a3b8;
}

.fx {
  font: italic 13px/16px "DejaVu Sans", sans-serif;
}

.fx sub {
  font-size: 9px;
  vertical-align: -2px;
}

.chart-row {
  display: flex;
}

/* Drawing tools */
.draw-tools {
  width: 36px;
  margin-top: -1px;
  padding-left: 3px;
  display: flex;
  flex-direction: column;
}

.draw-tools button {
  height: 26px;
  width: 28px;
  display: flex;
  align-items: center;
  justify-content: center;
}

.draw-tools .more {
  width: 30px;
  justify-content: space-between;
  padding-left: 4px;
}

.draw-tools .more::after {
  content: "";
  width: 3px;
  height: 3px;
  border: solid #475569;
  border-width: 1px 1px 0 0;
  transform: rotate(45deg);
}

.draw-tools svg {
  fill: none;
  stroke: #cbd5e1;
}

.draw-tools .dot {
  fill: #fff;
  stroke: none;
}

.draw-tools .off {
  opacity: 0.3;
}

/* Chart */
.chart-wrap {
  flex: 1;
  min-width: 0;
  position: relative;
}

#chart {
  width: 100%;
  height: auto;
  font-family: Roboto, sans-serif;
}

.legend {
  position: absolute;
  top: 3px;
  left: 5px;
  color: #8a93a3;
  font-size: 9px;
  line-height: 15px;
}

.legend p {
  margin: 0;
}

.legend em {
  font-style: normal;
  color: #10b981;
}

.ind {
  display: flex;
  align-items: center;
  gap: 9px;
  padding-left: 2px;
}

.ind svg {
  fill: #b6bcc6;
}

.ind .hole {
  fill: #0f172a;
}

.ind .teeth,
.ind .cross {
  fill: none;
  stroke: #b6bcc6;
  stroke-width: 1.3;
}

.gridline {
  stroke: #2a2f38;
  stroke-dasharray: 2 1;
}

.axis {
  stroke: #2f3338;
}

.axis-text {
  fill: #1f9d72;
  font-size: 9px;
  font-weight: 500;
}

.up {
  fill: #2ebd85;
  stroke: #2ebd85;
}

.dn {
  fill: #f92855;
  stroke: #f92855;
}

.wick {
  stroke-opacity: 0.75;
}

.body {
  stroke: none;
}

.vol-up {
  fill: #28353f;
}

.vol-dn {
  fill: #4a2632;
}

.entry-line {
  fill: none;
  stroke: #96182a;
  stroke-dasharray: 4 2;
}

.exit-line {
  fill: none;
  stroke: #0b7a30;
  stroke-dasharray: 4 2;
}

.funding-line {
  stroke: #1657bd;
  stroke-dasharray: 4 4;
}

.percent {
  fill: #0ab82f;
  font-size: 11px;
  font-weight: 700;
}

.brand path {
  fill: none;
  stroke: #2a6a4b;
  stroke-width: 2.5;
}

.brand text {
  fill: #2a6a4b;
  font-size: 10px;
  font-weight: 500;
}

.tiger-mark {
  fill: #6a7280;
}

.tiger-lines {
  fill: none;
  stroke: #0f172a;
  stroke-width: 1.2;
}

/* Summary */
.summary {
  display: flex;
  justify-content: space-between;
  margin: 2px 3px 3px 3px;
  padding: 2px;
  background: #1e293b;
  border-radius: 5px;
}

.stats {
  width: 81%;
  height: 27px;
  display: flex;
  align-items: center;
  gap: 8px;
  padding-left: 6px;
  background: #0f172a;
  border-radius: 5px;
  color: #94a3b8;
  font-size: 10px;
  font-weight: 500;
  white-space: nowrap;
}

.stats b {
  font-weight: 500;
  color: #f1f5f9;
}

.padlock {
  display: inline-block;
  vertical-align: -2px;
  margin: 0 1px 0 4px;
}

.stats select {
  appearance: none;
  width: 6px;
  height: 6px;
  margin: 0 7px 3px 8px;
  border: solid #94a3b8;
  border-width: 0 1px 1px 0;
  transform: rotate(45deg);
  vertical-align: middle;
}

.share {
  width: 98px;
  display: flex;
  align-items: center;
  justify-content: center;
  gap: 6px;
  background: #0f172a;
  border: 1px solid #475569;
  border-radius: 4px;
}

.share svg {
  fill: none;
  stroke: #e2e8f0;
  stroke-width: 1.2;
}

/* Notes and orders */
.bottom-row {
  flex: 1;
  min-height: 0;
  display: flex;
  gap: 3px;
  margin: 0 3px;
}

.notes {
  flex: 0 0 44%;
  padding: 3px 4px 0 3px;
  background: #1e293b;
  border-radius: 5px;
}

.note {
  position: relative;
  margin-bottom: 4px;
}

.note textarea {
  display: block;
  width: 100%;
  height: 49px;
  padding: 7px 10px;
  resize: none;
  background: #0f172a;
  border: 1px solid #334155;
  border-radius: 5px;
}

.note textarea::placeholder,
.video input::placeholder {
  color: #a9b7ca;
}

.note button {
  position: absolute;
  right: 6px;
  bottom: 7px;
  width: 49px;
  height: 21px;
  display: flex;
  align-items: center;
  justify-content: center;
  gap: 5px;
  background: #252e40;
  border-radius: 4px;
  color: #94a3b8;
  font-size: 8px;
  font-weight: 500;
}

.note button svg {
  fill: none;
  stroke: #b4becb;
}

.video {
  display: flex;
  align-items: center;
  gap: 12px;
  padding-right: 4px;
}

.video input {
  flex: 1;
  min-width: 0;
  height: 27px;
  margin-right: -4px;
  padding: 0 9px;
  background: #0f172a;
  border: 1px solid #475569;
  border-radius: 5px;
}

.orders {
  flex: 1;
  padding: 3px;
  background: #1e293b;
  border-radius: 5px;
  overflow: hidden;
}

table {
  width: 100%;
  table-layout: fixed;
  border-spacing: 0;
  background: #0f172a;
  border: 1px solid #334155;
  border-radius: 5px;
  text-align: center;
}

th,
td {
  padding: 0;
  border-bottom: 1px solid #273449;
}

th {
  height: 22px;
  padding-bottom: 3px;
  color: #94a3b8;
  font-size: 8px;
  font-weight: 500;
}

td {
  height: 26px;
  font-size: 9px;
  font-weight: 500;
}

.w-side { width: 19%; }
.w-time { width: 15%; }
.w-turn { width: 14%; }
.w-price { width: 18%; }
.w-vol { width: 17%; }

.down {
  display: inline-block;
  width: 1px;
  height: 8px;
  margin-right: 9px;
  background: #94a3b8;
  position: relative;
}

.down::after {
  content: "";
  position: absolute;
  left: -2px;
  bottom: 0;
  width: 4px;
  height: 4px;
  border: solid #94a3b8;
  border-width: 0 1px 1px 0;
  transform: rotate(45deg);
}

.bullet {
  display: inline-block;
  width: 5px;
  height: 5px;
  margin: 0 0 2px 4px;
  border-radius: 50%;
  background: #3b82f6;
}

/* Taskbar */
.taskbar {
  height: 48px;
  display: flex;
  align-items: stretch;
  justify-content: space-between;
  padding: 0 19px 0 11px;
  box-shadow: inset 0 1px #3c444d;
  background: linear-gradient(90deg, #1f1c2e, #1c1e33 9%, #14243f 16%, #152a33 25%, #172a30 34%, #1c2127 45%, #201f23 51%, #14223f 62%, #15252d 69%, #15262f 80%, #14203a 90%, #1c1e2a);
}

.task-icons {
  display: flex;
}

.task-icons span {
  width: 32px;
  display: grid;
  place-items: center;
  position: relative;
}

.task-icons svg {
  width: 16px;
  height: 16px;
}

.task-icons .run::after,
.task-icons .current::after {
  content: "";
  position: absolute;
  bottom: 5px;
  width: 3px;
  height: 3px;
  border-radius: 2px;
  background: #8d949c;
}

.task-icons .current::before {
  content: "";
  position: absolute;
  inset: 4px 2px;
  background: rgba(255, 255, 255, 0.08);
  border-radius: 4px;
}

.task-icons .current::after {
  width: 10px;
  background: #1e90ff;
}

.task-icons .badge::before {
  content: "";
  position: absolute;
  top: 12px;
  right: 6px;
  width: 4px;
  height: 4px;
  border-radius: 50%;
  background: #1e90ff;
}

.ps {
  font: bold 8px Roboto, sans-serif;
  fill: #00b4e6;
}

.surf {
  font: 900 5px Roboto, sans-serif;
  fill: #fff;
  text-anchor: middle;
}

.tee {
  font: bold 9px Roboto, sans-serif;
  fill: #fff;
  text-anchor: middle;
}

.clock {
  align-self: center;
  text-align: right;
  color: #fff;
  font: 11px/16px "Open Sans", sans-serif;
}
```

FILE: script.js
```js
// One minute candles: direction, high, body top, body bottom, low, volume
const candles = `
G 492 493 500 500 3|R 493 493 498 499 2|G 495 496 498 498 1|G 459 466 497 497 29|R 466 466 471 474 8
G 467 468 471 472 3|G 464 464 469 471 4|G 424 438 465 468 30|G 434 436 438 443 8|R 435 435 441 443 5
R 440 441 449 454 7|R 449 449 452 454 4|R 451 451 460 464 8|R 459 459 466 466 4|G 453 458 466 466 5
G 451 457 459 464 7|G 443 448 458 458 6|G 442 448 450 450 5|R 448 448 455 460 4|G 448 448 456 456 5
G 445 448 449 453 3|G 437 447 448 448 6|R 446 447 457 458 5|G 451 452 457 458 2|R 451 452 456 456 2
G 445 452 456 456 3|R 450 452 453 455 2|G 448 449 453 453 2|R 449 449 455 456 3|G 450 451 455 456 2
R 451 452 453 455 2|R 447 453 462 466 7|R 459 462 487 491 21|G 466 469 487 487 9|G 464 467 469 471 5
G 458 460 468 468 5|R 459 460 462 466 3|G 451 457 463 463 5|R 456 457 458 462 2|G 456 457 458 460 3
G 417 436 457 457 18|R 434 436 439 440 4|R 438 439 443 445 4|R 442 442 448 454 5|G 445 446 448 451 3
R 445 446 447 450 1|G 436 438 447 448 3|R 438 438 444 446 2|G 435 436 445 445 3|R 428 436 439 440 5
G 429 432 439 440 3|R 431 432 435 436 2|G 427 433 435 435 3|R 432 433 434 438 3|R 419 433 438 440 9
R 437 437 451 455 6|G 429 434 451 452 5|G 421 432 434 435 7|G 422 428 433 433 4|R 416 428 430 433 7
R 424 429 432 438 5|G 425 428 432 432 2|R 426 428 430 432 2|R 429 429 433 438 2|R 432 433 435 443 4
R 434 434 439 441 2|R 438 439 440 446 4|G 436 437 440 444 3|G 431 434 438 440 3|R 432 434 436 436 1
G 428 431 436 436 3|G 424 426 432 432 4|G 425 426 428 429 2|G 419 424 427 427 5|R 422 424 431 435 4
G 426 429 431 432 2|R 428 429 435 440 4|R 433 435 442 443 4|G 437 439 442 444 2|R 436 439 441 441 2
G 438 439 441 449 4|R 438 439 440 443 2|G 425 427 440 440 6|G 425 426 428 431 3|R 425 425 431 431 3
G 401 413 431 431 18|G 408 410 414 425 6|R 405 409 415 419 5|G 407 413 414 416 3|G 406 409 414 414 4
G 380 388 409 414 21|R 382 388 391 393 8|G 375 379 391 392 10|R 379 379 387 389 7|G 385 387 388 391 4
R 386 387 390 396 5|R 388 390 392 393 3|G 386 389 392 394 4|G 382 383 390 390 4|G 373 382 384 386 10
R 382 382 385 387 3|R 383 385 387 388 3|G 377 380 387 388 4|R 380 380 386 389 4|G 383 384 385 387 2
R 382 384 385 388 3|R 375 385 387 391 7|G 378 380 387 390 4|G 373 374 381 382 6|R 371 375 383 385 6
G 375 378 384 385 4|G 374 376 378 380 3|R 374 377 379 381 3|G 356 358 379 380 18|R 349 358 361 362 12
G 356 357 361 362 5|G 323 334 357 358 24|G 302 308 336 337 26|G 186 255 309 311 62|R 239 254 273 275 17
R 259 272 291 298 21|R 284 290 292 305 14|R 291 291 313 313 12|R 310 312 342 351 21|G 302 306 342 346 18
G 302 303 307 320 10|R 287 303 319 320 11|R 313 318 326 331 8|G 313 318 326 333 7|R 316 318 320 326 5
G 307 311 319 323 6|R 310 311 327 333 6|G 320 321 327 328 4|G 314 318 322 322 4|R 316 318 322 324 4
G 307 310 322 325 7|R 298 310 357 363 20|R 341 357 368 380 22|G 340 344 368 370 11|R 343 344 348 355 6
G 332 338 349 349 7|G 323 325 339 339 5|R 322 325 327 333 4|G 285 300 326 326 17|R 297 300 308 314 6
G 300 305 308 308 5|R 304 305 312 317 6|G 304 310 312 317 4|G 300 306 311 312 4|R 303 306 308 318 4
G 291 291 307 309 7|R 291 291 295 305 5|R 287 295 298 302 4|R 292 297 301 304 4|G 295 300 301 304 3
R 298 300 304 306 3|R 302 304 347 365 19|R 341 346 360 378 12|R 355 360 367 374 9|R 366 367 375 399 19
G 358 362 376 378 9|G 352 356 363 364 4`.trim().split(/[|\n]/).map(c => c.split(' '));

const base = 532;
const right = 1320;

let grid = '';
['0.34000', '0.32000', '0.30000', '0.28000', '0.26000', '0.24000', '0.22000'].forEach((price, i) => {
  const y = Math.round(206 + i * 45.6) + 0.5;
  grid += `<line class="gridline" x1="79" x2="${right}" y1="${y}" y2="${y}"/>`;
  grid += `<text class="axis-text" x="1326" y="${y + 2.5}">${price}</text>`;
});
['11:13', '11:43', '12:13', '12:43', '13:13'].forEach((time, i) => {
  const x = 248.5 + i * 180;
  grid += `<line class="gridline" x1="${x}" x2="${x}" y1="123" y2="${base}"/>`;
  grid += `<text class="axis-text" text-anchor="middle" x="${x}" y="545">${time}</text>`;
});
grid += `<path class="axis" fill="none" d="M${right + 0.5} 123V532.5M79 532.5H${right}"/>`;
document.getElementById('grid').innerHTML = grid;

let bodies = '';
let volume = '';
candles.forEach(([dir, high, top, bottom, low, vol], i) => {
  const x = 81 + i * 6;
  const cls = dir === 'G' ? 'up' : 'dn';
  const left = Math.max(x - 2, 79) - 0.5;
  bodies += `<line class="${cls} wick" x1="${x - 0.5}" x2="${x - 0.5}" y1="${high}" y2="${low}"/>`;
  bodies += `<rect class="${cls} body" x="${left}" y="${top}" width="${x + 2 - left}" height="${Math.max(bottom - top, 1)}"/>`;
  volume += `<rect class="vol-${cls}" x="${Math.max(x - 3, 79)}" y="${base - vol}" width="6" height="${vol}"/>`;
});
document.getElementById('candles').innerHTML = bodies;
document.getElementById('volume').innerHTML = volume;

// Entries, exit and funding time
document.getElementById('marks').innerHTML = `
  <path class="entry-line" d="M793 213.500H${right}"/>
  <path class="exit-line" d="M1038 381.500H${right}"/>
  <path d="M784.500 200l4.500 4 4.500-4M784.500 214l4.500 4 4.500-4" fill="none" stroke="#e50000" stroke-width="2"/>
  <path d="M1029 388l6-6 6 6" fill="none" stroke="#0ab82f" stroke-width="2"/>
  <path class="funding-line" d="M890.500 348V508"/>
  <circle cx="890.500" cy="513" r="6" fill="#1677ff"/>
  <text x="890.500" y="516" text-anchor="middle" font-size="8" font-weight="700" fill="#fff">F</text>
  <text class="percent" x="1278" y="301">21.89%</text>`;
```
